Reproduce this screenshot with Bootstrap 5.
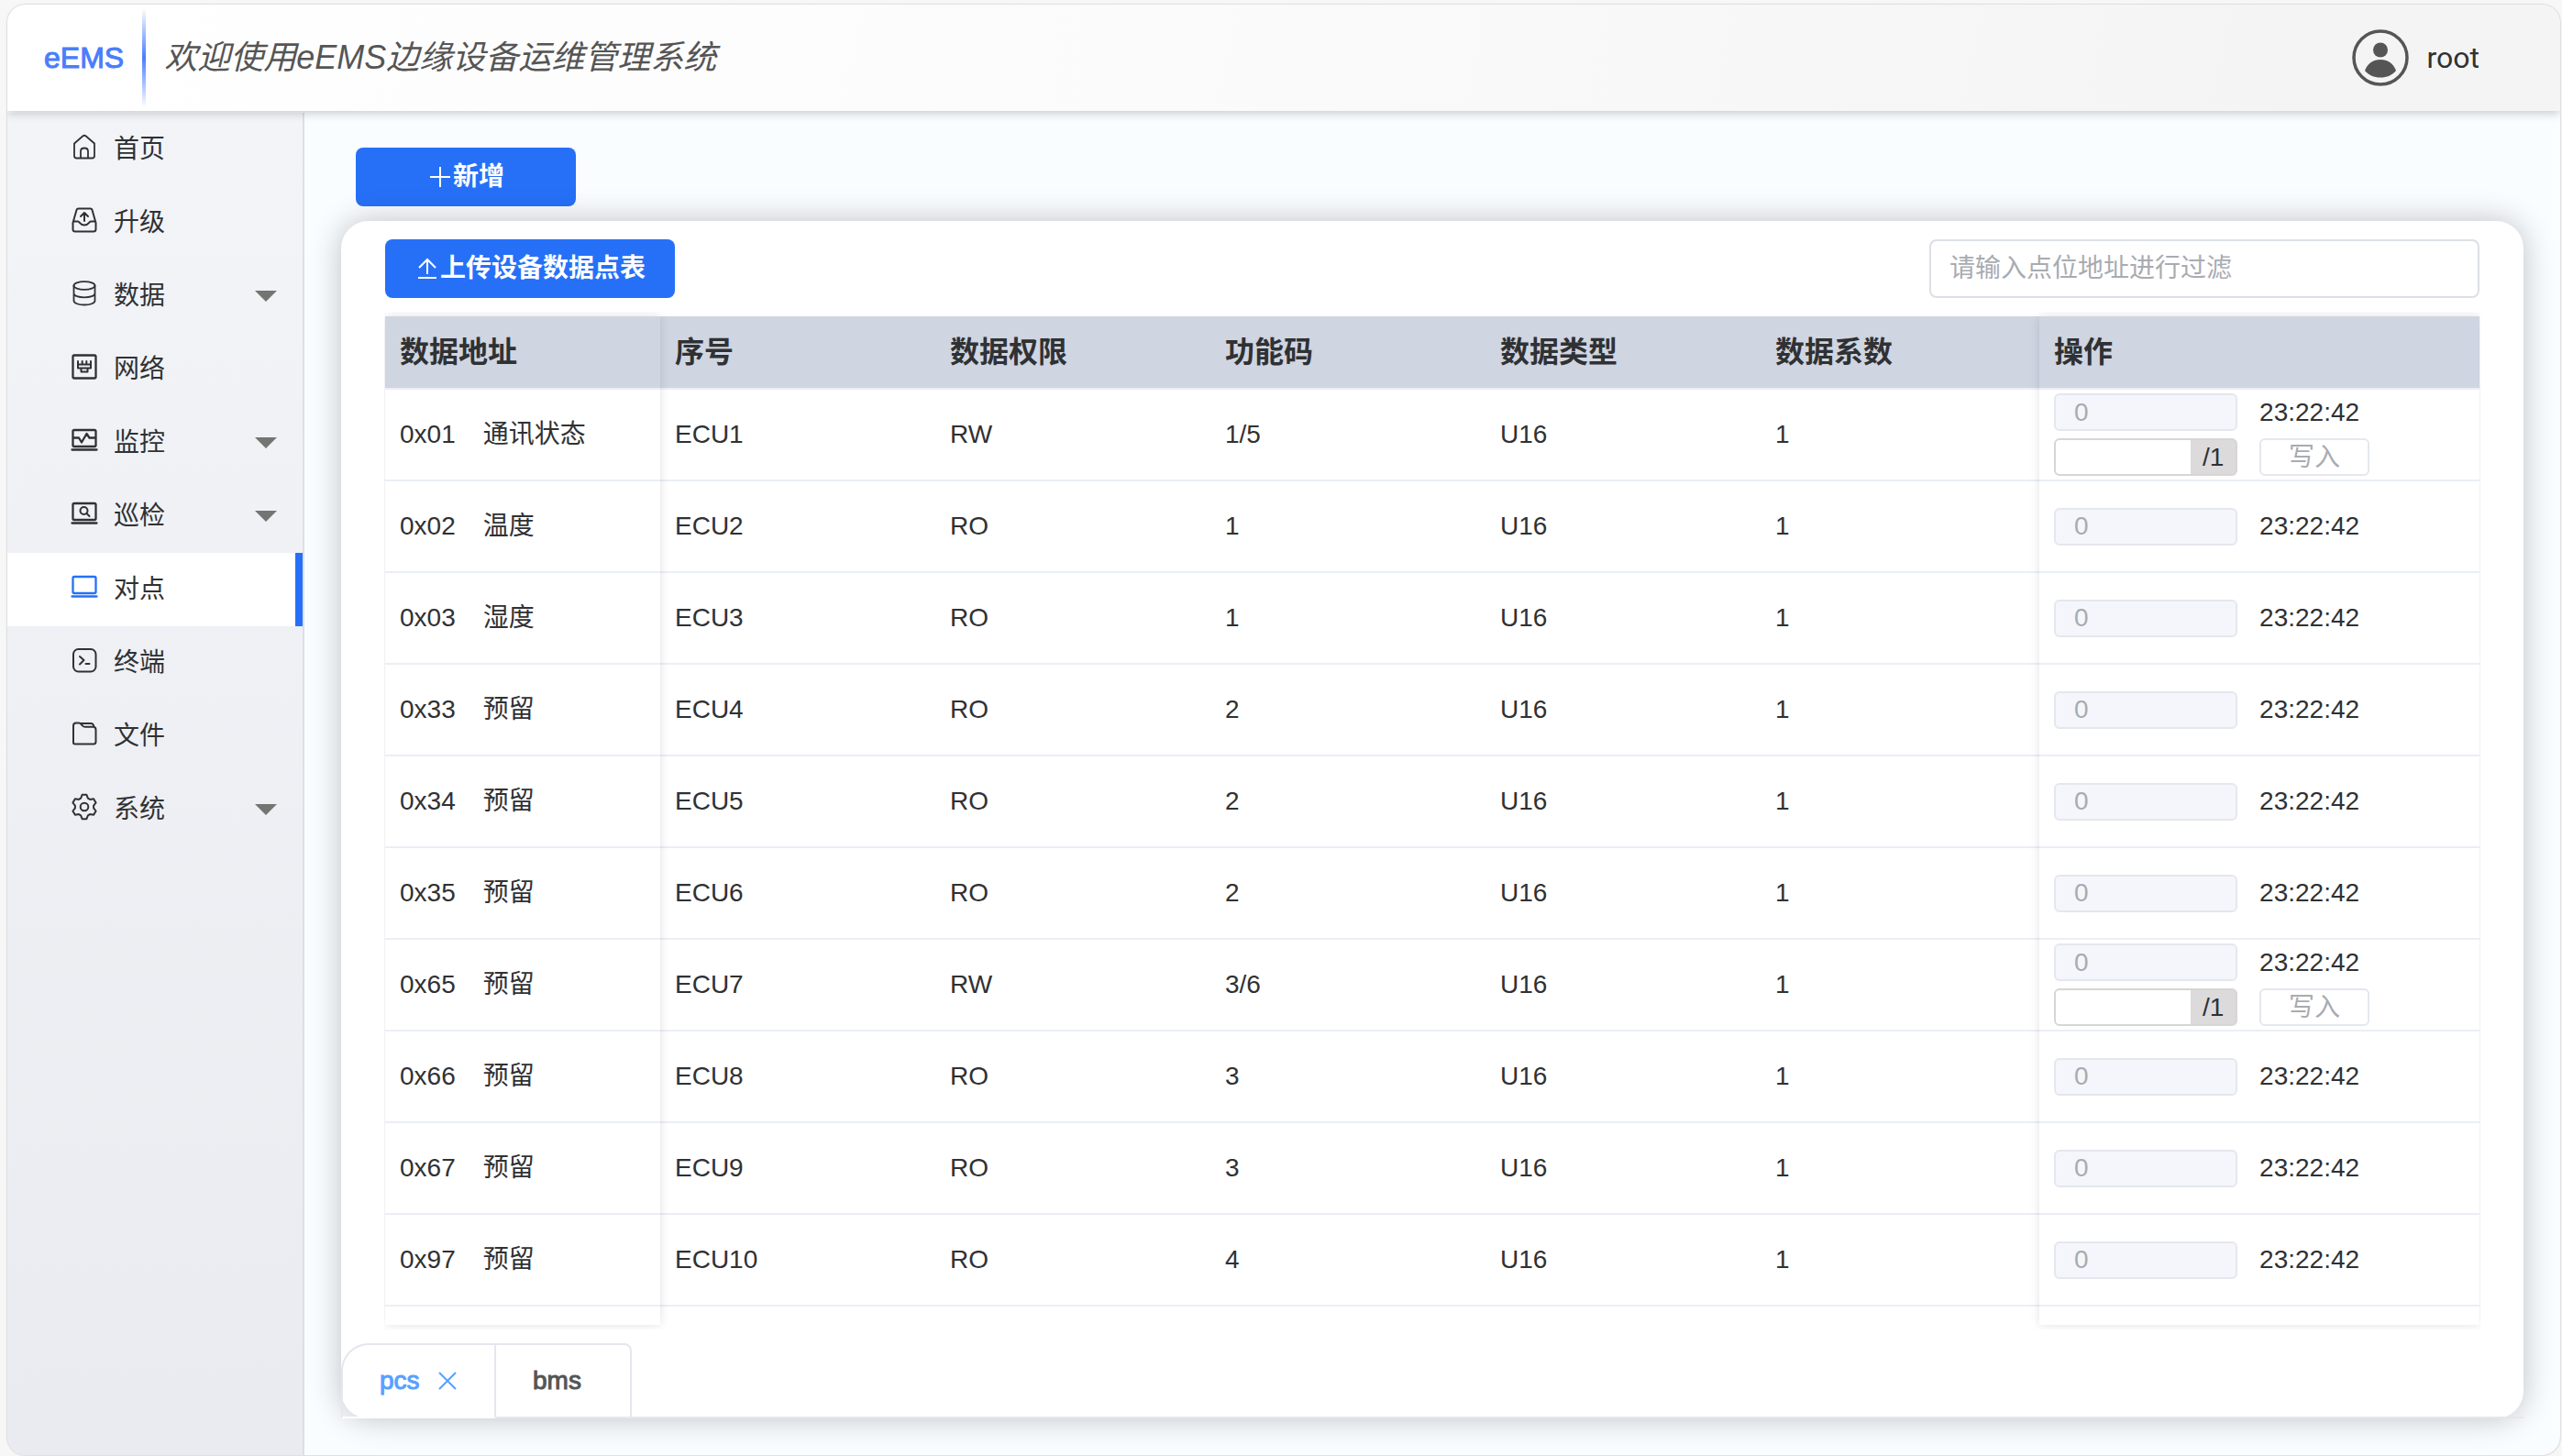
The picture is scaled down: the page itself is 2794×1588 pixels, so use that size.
<!DOCTYPE html>
<html lang="zh-CN">
<head>
<meta charset="utf-8">
<meta name="viewport" content="width=device-width, initial-scale=1">
<title>eEMS</title>
<link href="https://cdn.jsdelivr.net/npm/bootstrap@5.3.0/dist/css/bootstrap.min.css" rel="stylesheet">
<style>
:root { --brand: #2670f8; --ink: #303133; --line: #ebeef5; --edge: #e4e7ed; --mute: #a8abb2; }
body { background: #f7f7f7; color: var(--ink); font-family: "Liberation Sans", "Noto Sans CJK SC", sans-serif; font-size: 28px; line-height: 40px; }
.shell { height: 100vh; padding: 5px 2px 1px 8px; }
.frame { border-radius: 20px; box-shadow: 0 0 2px rgba(0,0,0,.35); background: #fafdff; overflow: hidden; }
.topbar { height: 116px; padding: 0 88px 0 40px; background: linear-gradient(100deg, #fff, #fcfbfb 45%, #f4f4f4 90%); box-shadow: 0 2px 10px rgba(0,0,0,.22); position: relative; z-index: 2; }
.logo { font-size: 32px; color: #4a7dfc; -webkit-text-stroke: 1px #4a7dfc; }
.rule { width: 4px; height: 108px; margin: 0 20px; background: linear-gradient(rgba(74,125,252,0), #4a7dfc, rgba(74,125,252,0)); }
.headline { font-size: 36px; line-height: 48px; font-style: italic; font-weight: 400; color: #555; }
.user { font-family: Roboto, sans-serif; font-size: 32px; color: var(--ink); gap: 20px; }
.side { width: 324px; margin-top: 2px; border-right: 2px solid #dcdfe6; background: linear-gradient(#f2f4f8, #e9ebf0); }
.side a { height: 80px; padding: 0 28px 0 68px; color: var(--ink); text-decoration: none; }
.side a svg { margin-bottom: 6px; }
.side a.current { background: #fff; border-right: 8px solid var(--brand); }
.side a.current svg { color: var(--brand); }
.tri { width: 24px; height: 12px; background: #737573; clip-path: polygon(0 0, 100% 0, 50% 100%); }
.ico { width: 32px; height: 32px; fill: none; stroke: currentColor; stroke-width: 2; stroke-linecap: round; stroke-linejoin: round; }
.ico-sm { width: 28px; height: 28px; fill: none; stroke: currentColor; stroke-width: 2; }
.page { padding: 40px; }
.btn-main { height: 64px; padding: 0 32px; border: 0; border-radius: 8px; background: var(--brand); color: #fff; font-size: 28px; line-height: 40px; font-weight: 700; }
.btn-new { width: 240px; margin-left: 16px; }
.sheet { margin-top: 16px; border-radius: 30px; background: #fff; box-shadow: 0 0 34px rgba(0,0,0,.24); padding-top: 20px; }
.inner { padding: 0 48px; }
.search { width: 600px; height: 64px; border: 2px solid #dcdfe6; border-radius: 8px; padding: 0 20px; font-size: 28px; }
.search::placeholder { color: var(--mute); opacity: 1; }
.points { table-layout: fixed; margin: 0; color: var(--ink); border-collapse: separate; border-spacing: 0; }
.points > :not(caption) > * > * { padding: 0 16px; height: 100px; border-bottom: 2px solid var(--line); color: var(--ink); vertical-align: middle; background: transparent; white-space: nowrap; }
.points > thead > tr > th { height: 80px; background: #cfd5e1; font-size: 32px; font-weight: 700; }
.points > * > tr > :last-child { padding-left: 20px; }
.points .c-first { width: 300px; }
.points .c-last { width: 484px; }
.pt-name { margin-left: 30px; }
.veil { top: 0; bottom: 0; box-shadow: 0 0 10px rgba(0,0,0,.12); pointer-events: none; }
.veil-l { left: 0; width: 300px; clip-path: inset(-5px -10px -5px -1px); }
.veil-r { right: 0; width: 480px; clip-path: inset(-5px -1px -5px -10px); }
.ops { gap: 8px 24px; grid-template-columns: 200px 120px; }
.val { width: 200px; height: 41px; border: 2px solid var(--edge); border-radius: 6px; background: #f5f6fb; color: var(--mute); font-size: 28px; padding: 0 20px; }
.setter { width: 200px; height: 41px; border: 2px solid #d6d6d6; border-radius: 6px; background: #dcdadb; overflow: hidden; }
.setter input { width: 147px; border: 0; background: #fff; padding: 0 12px; }
.setter label { line-height: 37px; }
.write { height: 41px; border: 2px solid var(--edge); border-radius: 6px; background: #fff; color: var(--mute); font-size: 28px; line-height: 36px; padding: 0; }
.sheet-tabs { margin-top: 20px; border-bottom: 2px solid var(--edge); }
.sheet-tab { width: 148px; height: 82px; margin-bottom: -2px; border: 2px solid var(--edge); border-left: 0; color: #555; padding: 0 40px; background: transparent; text-align: left; -webkit-text-stroke: 1px currentColor; }
.sheet-tab.on { width: 169px; color: #58a0ff; border-left: 2px solid var(--edge); border-bottom-color: #fff; border-radius: 30px 0 0 0; padding: 0 20px 0 40px; gap: 20px; }
.sheet-tab.end { border-radius: 0 8px 0 0; }
</style>
<script src="https://cdn.jsdelivr.net/npm/bootstrap@5.3.0/dist/js/bootstrap.bundle.min.js"></script>
</head>
<body>
<div class="shell">
<div class="frame d-flex flex-column h-100">
  <header class="topbar d-flex align-items-center flex-shrink-0">
    <span class="logo">eEMS</span>
    <span class="rule"></span>
    <h1 class="headline mb-0">欢迎使用eEMS边缘设备运维管理系统</h1>
    <div class="user d-flex align-items-center ms-auto">
      <svg width="62" height="62" viewBox="1 1 62 62" fill="#555"><circle cx="32" cy="32" r="29" fill="none" stroke="#555" stroke-width="3.500"/><circle cx="32" cy="23.500" r="8"/><path d="M15 46C18 38 24 34 32 34s14 4 17 12c-4 5-10 7.500-17 7.500S19 51 15 46z"/></svg>
      <span>root</span>
    </div>
  </header>
  <div class="d-flex flex-grow-1 overflow-hidden">
    <nav class="side flex-shrink-0" id="menu"></nav>
    <main class="page d-flex flex-column flex-grow-1 overflow-hidden">
      <div class="d-flex"><button type="button" class="btn-main btn-new d-inline-flex align-items-center justify-content-center"><svg class="ico-sm" viewBox="0 0 28 28"><path d="M14 3v22M3 14h22"/></svg>新增</button></div>
      <section class="sheet d-flex flex-column flex-grow-1">
        <div class="inner d-flex justify-content-between">
          <button type="button" class="btn-main d-inline-flex align-items-center"><svg class="ico-sm" viewBox="0 0 28 28"><path d="M14 20V5M5 13l9-9 9 9M4 24h20"/></svg>上传设备数据点表</button>
          <input class="search" type="text" aria-label="过滤" placeholder="请输入点位地址进行过滤">
        </div>
        <div class="inner flex-grow-1 d-flex flex-column mt-3 pt-1">
          <div class="position-relative flex-grow-1">
            <table class="table points">
              <thead><tr><th class="c-first">数据地址</th><th>序号</th><th>数据权限</th><th>功能码</th><th>数据类型</th><th>数据系数</th><th class="c-last">操作</th></tr></thead>
              <tbody id="rows"></tbody>
            </table>
            <div class="veil veil-l position-absolute"></div>
            <div class="veil veil-r position-absolute"></div>
          </div>
        </div>
        <div class="sheet-tabs d-flex">
          <button type="button" class="sheet-tab on d-flex align-items-center">pcs<svg width="20" height="20" viewBox="0 0 20 20" fill="none" stroke="currentColor" stroke-width="2"><path d="M1 1l18 18M19 1L1 19"/></svg></button>
          <button type="button" class="sheet-tab end">bms</button>
        </div>
      </section>
    </main>
  </div>
</div>
</div>
<script>
const icons = {
  home: '<path stroke-width="1.800" d="M5 12.500L14.500 4.300q1.500-1.200 3 0L27 12.500V26q0 2.500-2.500 2.500h-17Q5 28.500 5 26zM12 28.500V21q0-3.500 4-3.500t4 3.500v7.500"/>',
  up: '<path d="M9.500 3.500h13q1.600 0 2 1.500L28.500 19v7q0 2.500-2.500 2.500H6Q3.500 28.500 3.500 26v-7L7.500 5q.4-1.500 2-1.500zM4 17.500h5c2 0 2 4 7 4s5-4 7-4h5M16 17V8.500M12 12l4-4 4 4"/>',
  db: '<ellipse stroke-width="1.800" cx="16" cy="7.500" rx="11.500" ry="4.300"/><path stroke-width="1.800" d="M4.500 7.500V24c0 2.600 5 4.500 11.500 4.500S27.500 26.600 27.500 24V7.500M4.500 16c0 2.500 5 4.300 11.500 4.300S27.500 18.500 27.500 16"/>',
  net: '<rect x="3.500" y="3.500" width="25" height="25" rx="1.500" stroke-width="2.300"/><path d="M9 10v7.500h14V10M9 13.500h14M13.700 10v3.500M18.300 10v3.500M12.500 17.500v4h7v-4"/>',
  mon: '<rect x="3.500" y="5" width="25" height="18" rx="1.500" stroke-width="2.300"/><path stroke-width="2.300" d="M2.500 26.500h27M4 13.500h6l3 5L18.500 9l3 4.500H28"/>',
  chk: '<rect x="3.500" y="5" width="25" height="18" rx="1.500" stroke-width="2.300"/><path stroke-width="2.300" d="M2.500 26.500h27"/><circle cx="15.500" cy="13" r="4"/><path d="M18.500 16l3 3"/>',
  pc: '<rect x="3.500" y="5" width="25" height="18" rx="1.500" stroke-width="2.300"/><path stroke-width="2.300" d="M2.500 26.500h27"/>',
  term: '<rect x="4" y="4" width="24.500" height="24.500" rx="5.500"/><path d="M11 12l4.500 4-4.500 4.500M17.500 20h4"/>',
  file: '<path d="M4 26V7.500Q4 4.500 7 4.500h3q1.500 0 2.500 1.300L14 7.500Q15 8.800 17 8.800h8.500Q28.500 8.800 28.500 12v13q0 2.500-2.500 2.500H6Q4 27.500 4 26zM11.500 5H23q3 0 3.500 3.800"/>',
  gear: '<circle cx="16" cy="16" r="4.300"/><path d="M13.600 2.800h4.800l1.500 3.800 2.200 1.300 4-.6 2.500 4.200-2.500 3.200v2.600l2.500 3.200-2.500 4.200-4-.6-2.200 1.300-1.500 3.800h-4.800l-1.500-3.800-2.200-1.300-4 .6-2.500-4.200 2.500-3.200v-2.600l-2.500-3.200 2.500-4.200 4 .6 2.200-1.300z"/>'
};
const menu = [['home','首页'],['up','升级'],['db','数据',1],['net','网络'],['mon','监控',1],['chk','巡检',1],['pc','对点'],['term','终端'],['file','文件'],['gear','系统',1]];
document.getElementById('menu').innerHTML = menu.map(([i, t, sub]) =>
  `<a href="#" class="d-flex align-items-center${i === 'pc' ? ' current' : ''}"><svg class="ico me-3" viewBox="0 0 32 32">${icons[i]}</svg><span>${t}</span>${sub ? '<span class="tri ms-auto"></span>' : ''}</a>`).join('');
const rows = [['0x01','通讯状态','RW','1/5'],['0x02','温度','RO','1'],['0x03','湿度','RO','1'],['0x33','预留','RO','2'],['0x34','预留','RO','2'],['0x35','预留','RO','2'],['0x65','预留','RW','3/6'],['0x66','预留','RO','3'],['0x67','预留','RO','3'],['0x97','预留','RO','4']];
document.getElementById('rows').innerHTML = rows.map(([a, n, p, f], k) =>
  `<tr><td>${a}<span class="pt-name">${n}</span></td><td>ECU${k + 1}</td><td>${p}</td><td>${f}</td><td>U16</td><td>1</td><td><div class="ops d-grid align-items-center">
  <input class="val" type="text" value="0" aria-label="${a}" disabled><span>23:22:42</span>${p === 'RW' ? `<div class="setter d-flex"><input type="text" id="set${k}"><label class="flex-grow-1 text-center" for="set${k}">/1</label></div><button type="button" class="write" disabled>写入</button>` : ''}</div></td></tr>`).join('');
</script>
</body>
</html>
